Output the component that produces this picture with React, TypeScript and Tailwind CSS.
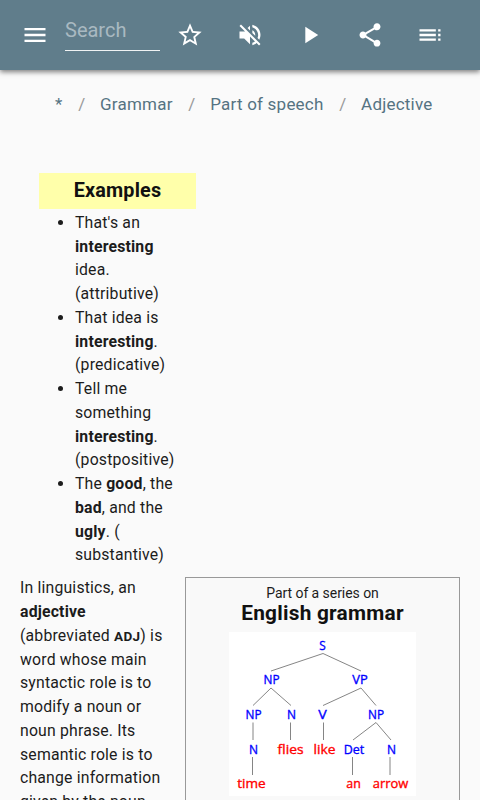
import { MdMenu, MdPlayArrow, MdShare, MdStarBorder, MdToc, MdVolumeOff } from "react-icons/md";

const crumbs = ["*", "Grammar", "Part of speech", "Adjective"];

const nodes = [
  { text: "S", x: 93.5, y: 17.5, width: 6.5 },
  { text: "NP", x: 42.5, y: 52, width: 16 },
  { text: "VP", x: 131, y: 52, width: 15.5 },
  { text: "NP", x: 24.5, y: 87, width: 16 },
  { text: "N", x: 62.5, y: 87, width: 9 },
  { text: "V", x: 93.5, y: 87, width: 8.5 },
  { text: "NP", x: 147, y: 87, width: 16 },
  { text: "N", x: 24.5, y: 121.5, width: 9 },
  { text: "flies", x: 61.5, y: 121.5, width: 26, word: true },
  { text: "like", x: 95.5, y: 121.5, width: 22, word: true },
  { text: "Det", x: 125, y: 121.5, width: 20.5 },
  { text: "N", x: 162.5, y: 121.5, width: 9 },
  { text: "time", x: 22.5, y: 156, width: 28.5, word: true },
  { text: "an", x: 124.5, y: 156, width: 14.5, word: true },
  { text: "arrow", x: 161.5, y: 156, width: 35.5, word: true },
];

function Toolbar() {
  return (
    <header className="relative flex h-[70px] shrink-0 items-center bg-[#607d8b] pl-[21px] text-white shadow-[0_2px_5px_rgba(0,0,0,0.5)]">
      <button type="button" aria-label="Menu">
        <MdMenu size={28} />
      </button>
      <input
        type="text"
        placeholder="Search"
        className="-mt-px ml-4 h-[33px] w-[95px] border-b border-white/90 pb-[9px] text-[20px] leading-5 placeholder-[#a9b9c1] outline-none"
      />
      <div className="ml-4 flex gap-8">
        <MdStarBorder size={28} />
        <MdVolumeOff size={28} />
        <MdPlayArrow size={28} />
        <MdShare size={28} />
        <MdToc size={28} />
      </div>
    </header>
  );
}

function SyntaxTree() {
  return (
    <svg width="187" height="164" viewBox="0 0 187 164" className="mx-auto bg-white">
      <path
        d="M42 39 94 21.5 132 39M24 73.500 42 56 62 73.500M94 73.500 132 56 147 73.500M124 108 147 90.500 162 108M24 90.500V108M61.500 90.500V108M94.500 90.500V108M23.500 125V143M123.500 125V143M161 125V143"
        fill="none"
        stroke="#777"
        strokeWidth="0.9"
      />
      {nodes.map((node, i) => (
        <text
          key={i}
          x={node.x}
          y={node.y}
          textAnchor="middle"
          textLength={node.width}
          lengthAdjust="spacingAndGlyphs"
          fill={node.word ? "#f00" : "#00f"}
          stroke={node.word ? "#f00" : "#00f"}
          strokeWidth="0.35"
          className="font-['Open_Sans',sans-serif] text-[13px]"
        >
          {node.text}
        </text>
      ))}
    </svg>
  );
}

export default function App() {
  return (
    <div className="flex h-[800px] w-[480px] flex-col overflow-hidden bg-[#fafafa] font-[Roboto,sans-serif] text-[#1c1c1c]">
      <Toolbar />

      <nav className="mt-[22px] ml-[55px] flex text-[17px] leading-6 tracking-[0.22px] whitespace-nowrap text-[#557382]">
        {crumbs.map((crumb, i) => (
          <span key={crumb}>
            {i > 0 && <span className="mr-[14.7px] ml-[15.6px] text-[#999]">/</span>}
            {crumb}
          </span>
        ))}
      </nav>

      <section className="mt-[57px] ml-[39px] w-[157px] text-[15.8px] leading-[23.75px] tracking-[0.18px]">
        <h2 className="h-9 bg-[#ffffaa] text-center text-[19.8px] leading-[35px] font-bold tracking-[0.2px] text-[#111]">
          Examples
        </h2>
        <ul className="mt-[1.800px] list-disc pl-9 whitespace-nowrap">
          <li>
            That's an
            <br />
            <b>interesting</b>
            <br />
            idea.
            <br />
            (attributive)
          </li>
          <li>
            That idea is
            <br />
            <b>interesting</b>.<br />
            (predicative)
          </li>
          <li>
            Tell me
            <br />
            something
            <br />
            <b>interesting</b>.<br />
            (postpositive)
          </li>
          <li>
            The <b>good</b>, the
            <br />
            <b>bad</b>, and the
            <br />
            <b>ugly</b>. (<br />
            substantive)
          </li>
        </ul>
      </section>

      <div className="mt-[9.3px] flex pl-5">
        <p className="w-[165px] shrink-0 text-[15.8px] leading-[23.75px] tracking-[0.18px] whitespace-nowrap">
          In linguistics, an
          <br />
          <b>adjective</b>
          <br />
          (abbreviated <b className="text-[13.5px] leading-none tracking-[0.3px]">ADJ</b>) is
          <br />
          word whose main
          <br />
          syntactic role is to
          <br />
          modify a noun or
          <br />
          noun phrase. Its
          <br />
          semantic role is to
          <br />
          change information
          <br />
          given by the noun
        </p>
        <aside className="mt-[0.4px] h-[260px] w-[275px] border border-[#999] bg-[#f9f9f9] text-center">
          <p className="mt-[7px] text-[14px] leading-4 tracking-[-0.05px]">Part of a series on</p>
          <h3 className="mb-[7px] text-[20.8px] leading-6 font-bold tracking-[0.25px] text-[#111]">
            English grammar
          </h3>
          <SyntaxTree />
        </aside>
      </div>
    </div>
  );
}
